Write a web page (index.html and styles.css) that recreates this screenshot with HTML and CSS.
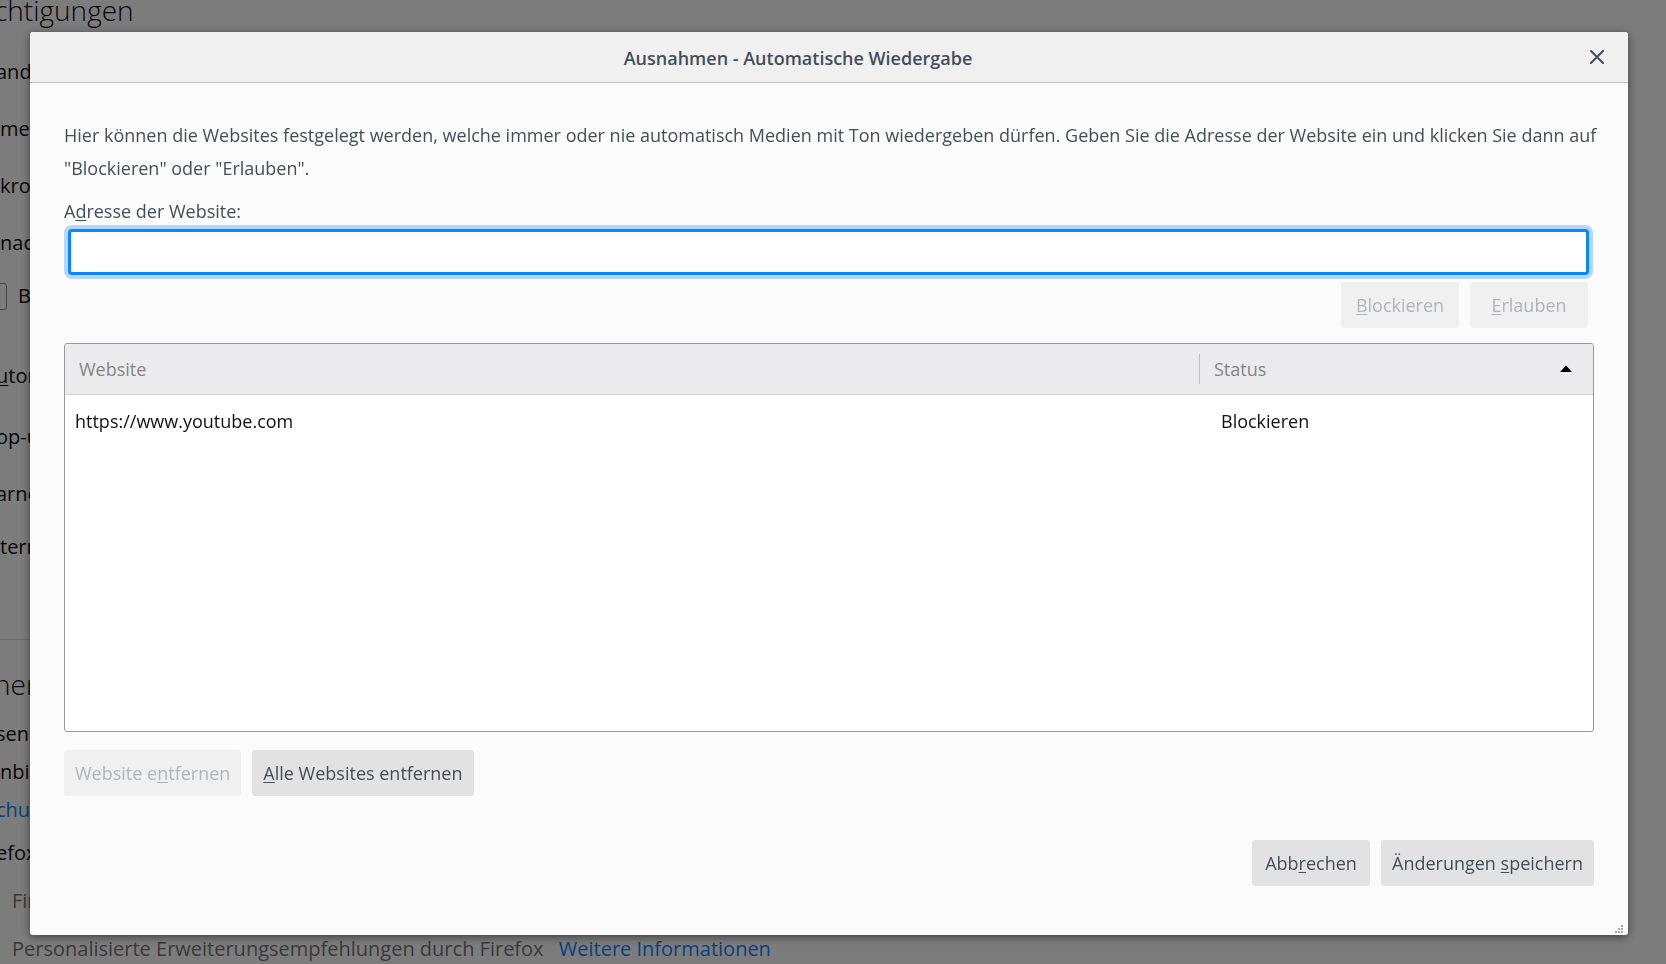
FILE: index.html
```html
<!DOCTYPE html>
<html lang="de">
<head>
<meta charset="utf-8">
<meta name="viewport" content="width=device-width, initial-scale=1">
<title>Ausnahmen - Automatische Wiedergabe</title>
<link rel="stylesheet" href="styles.css">
</head>
<body>
<main class="page">
  <h2 class="page-title">chtigungen</h2>
  <section class="group">
    <p class="row clipped">and</p>
    <p class="row">me</p>
    <p class="row">kro</p>
    <p class="row row-close">nac</p>
    <label class="row check-row"><input type="checkbox" class="check">B</label>
  </section>
  <section class="group group-permissions">
    <p class="row row-wide clipped"><u>u</u>tom</p>
    <p class="row clipped">op-u</p>
    <p class="row row-close clipped">arne</p>
    <p class="row">tern</p>
  </section>
  <section class="group group-data">
    <h2 class="page-title section-title">ner</h2>
    <p class="row row-tight clipped">sen</p>
    <p class="row row-tight">nbi</p>
    <p class="row row-link clipped"><a href="#schutz">chu</a></p>
    <p class="row row-option clipped">efox</p>
    <p class="row row-option muted">Fir</p>
    <p class="row muted">Personalisierte Erweiterungsempfehlungen durch Firefox <a class="more" href="#info">Weitere Informationen</a></p>
  </section>
</main>
<div class="overlay">
  <div class="dialog" role="dialog" aria-modal="true" aria-labelledby="dialog-title">
    <header class="dialog-header">
      <h1 class="dialog-title" id="dialog-title">Ausnahmen - Automatische Wiedergabe</h1>
      <button class="close" type="button" aria-label="Schließen">
        <svg width="14" height="14" viewBox="0 0 14 14" fill="none" stroke="currentColor" stroke-width="2" stroke-linecap="round"><path d="M1 1l12 12M13 1L1 13"/></svg>
      </button>
    </header>
    <form class="dialog-body">
      <p class="intro">Hier können die Websites festgelegt werden, welche immer oder nie automatisch Medien mit Ton wiedergeben dürfen. Geben Sie die Adresse der Website ein und klicken Sie dann auf "Blockieren" oder "Erlauben".</p>
      <label class="field-label" for="url">A<u>d</u>resse der Website:</label>
      <input class="field" id="url" type="text">
      <div class="actions actions-field">
        <button class="btn" type="button" disabled><span><u>B</u>lockieren</span></button>
        <button class="btn" type="button" disabled><span><u>E</u>rlauben</span></button>
      </div>
      <div class="list">
        <table class="sites">
          <thead>
            <tr>
              <th class="col-site" scope="col">Website</th>
              <th class="col-status" scope="col" aria-sort="ascending">
                <div class="status-head">Status
                  <svg width="14" height="8" viewBox="0 0 14 8"><path d="M7 0.5L13 7H1z" fill="#000"/></svg>
                </div>
              </th>
            </tr>
          </thead>
          <tbody>
            <tr><td>https://www.youtube.com</td><td class="cell-status">Blockieren</td></tr>
          </tbody>
        </table>
      </div>
      <div class="actions actions-list">
        <button class="btn" type="button" disabled><span>Website e<u>n</u>tfernen</span></button>
        <button class="btn" type="button"><span><u>A</u>lle Websites entfernen</span></button>
      </div>
      <div class="actions actions-dialog">
        <button class="btn" type="button"><span>Abb<u>r</u>echen</span></button>
        <button class="btn" type="submit"><span>Änderungen <u>s</u>peichern</span></button>
      </div>
    </form>
    <svg class="grip" width="8" height="8" viewBox="0 0 8 8" fill="#a8a8a8"><path d="M6 0h2v2H6zM3 3h2v2H3zM6 3h2v2H6zM0 6h2v2H0zM3 6h2v2H3zM6 6h2v2H6z"/></svg>
  </div>
</div>
</body>
</html>
```
FILE: styles.css
```css
* {
  box-sizing: border-box;
}

body {
  margin: 0;
  height: 100vh;
  overflow: hidden;
  background: #f9f9fa;
  color: #0c0c0d;
  font-family: "Open Sans", "Noto Sans", sans-serif;
  font-size: 18px;
}

h1,
h2,
p {
  margin: 0;
}

a {
  color: #0a84ff;
  text-decoration: none;
}

u {
  text-decoration-thickness: 1px;
  text-underline-offset: 2px;
  text-decoration-skip-ink: none;
}

/* Settings page behind the dialog */
.page {
  height: 100vh;
  overflow: hidden;
  font-size: 20px;
  line-height: 28px;
  white-space: nowrap;
}

.page-title {
  margin: -10px 0 28px -6px;
  font-size: 28px;
  line-height: 40px;
  font-weight: 300;
}

.row {
  margin-bottom: 29px;
}

.clipped {
  margin-left: -4px;
}

.row-close {
  margin-bottom: 25px;
}

.row-wide {
  margin-bottom: 33px;
}

.row-tight {
  margin-bottom: 10px;
}

.row-link {
  margin-bottom: 15px;
}

.row-option {
  margin-bottom: 20px;
}

.check-row {
  display: flex;
  align-items: center;
  gap: 11px;
  margin-bottom: 0;
}

.check {
  appearance: none;
  width: 27px;
  height: 27px;
  margin: 0 0 0 -20px;
  border: 1px solid #8a8a8b;
  border-radius: 3px;
}

.group-permissions {
  margin-top: 52px;
}

.group-data {
  width: 60%;
  border-top: 1px solid #d7d7db;
  margin-top: 78px;
}

.section-title {
  margin: 24px 0 16px -6px;
}

.muted {
  padding-left: 12px;
  color: #737373;
}

.more {
  margin-left: 10px;
}

/* Dialog */
.overlay {
  position: fixed;
  inset: 0;
  display: flex;
  padding: 32px 38px 29px 30px;
  background: rgba(0, 0, 0, 0.5);
}

.dialog {
  position: relative;
  flex: 1;
  display: flex;
  flex-direction: column;
  min-width: 0;
  border-radius: 3px;
  background: #fbfbfb;
  color: #424f5a;
  box-shadow: 0 2px 8px rgba(0, 0, 0, 0.5);
}

.dialog-header {
  display: grid;
  grid-template-columns: 1fr 62px;
  align-items: center;
  height: 51px;
  border-bottom: 1px solid #c0c0c0;
  border-radius: 3px 3px 0 0;
  background: #f0f0f0;
}

.dialog-title {
  padding-top: 2px;
  font-size: 18px;
  line-height: 24px;
  font-weight: 600;
  text-align: center;
}

.close {
  display: grid;
  place-items: center;
  width: 32px;
  height: 32px;
  margin-left: 15px;
  padding: 0;
  border: 0;
  background: none;
  color: inherit;
}

.dialog-body {
  flex: 1;
  display: flex;
  flex-direction: column;
  min-height: 0;
  padding: 36px 34px 49px;
}

.intro {
  margin-right: -16px;
  line-height: 33px;
}

.field-label {
  align-self: flex-start;
  margin-top: 14px;
  line-height: 24px;
}

.field {
  height: 46px;
  margin: 6px 5px 0 4px;
  padding: 0 8px;
  border: 3px solid #0a84ff;
  border-radius: 4px;
  outline: 0;
  background: #fff;
  box-shadow: 0 0 0 4px #b3d8ff;
  font: inherit;
}

.actions {
  display: flex;
  gap: 11px;
}

.actions-field {
  justify-content: flex-end;
  margin: 7px 6px 15px 0;
}

.actions-list {
  margin-top: 18px;
}

.actions-dialog {
  justify-content: flex-end;
  margin-top: 44px;
}

.btn {
  min-width: 118px;
  height: 46px;
  padding: 0 11px;
  border: 0;
  border-radius: 3px;
  background: #e2e2e2;
  color: inherit;
  font: inherit;
}

.btn:disabled {
  background: #f0f0f1;
  color: #b1b5b9;
}

.list {
  flex: 1;
  min-height: 120px;
  overflow: hidden;
  border: 1px solid #989899;
  border-radius: 3px;
  background: #fff;
}

.sites {
  width: 100%;
  border-collapse: separate;
  border-spacing: 0;
  table-layout: fixed;
  text-align: left;
  line-height: 24px;
}

.sites th {
  height: 51px;
  padding: 10px 0;
  border-bottom: 1px solid #d4d4d8;
  background: #ebebed;
  color: #858585;
  font-weight: 400;
}

.sites .col-site {
  padding-left: 14px;
}

.sites .col-status {
  width: 394px;
}

.status-head {
  display: flex;
  align-items: center;
  justify-content: space-between;
  height: 30px;
  padding: 0 20px 0 14px;
  border-left: 1px solid #c0c0c2;
}

.sites td {
  height: 52px;
  padding: 0 0 0 10px;
  color: #101010;
}

.sites .cell-status {
  padding-left: 22px;
}

.grip {
  position: absolute;
  right: 5px;
  bottom: 2px;
}
```
